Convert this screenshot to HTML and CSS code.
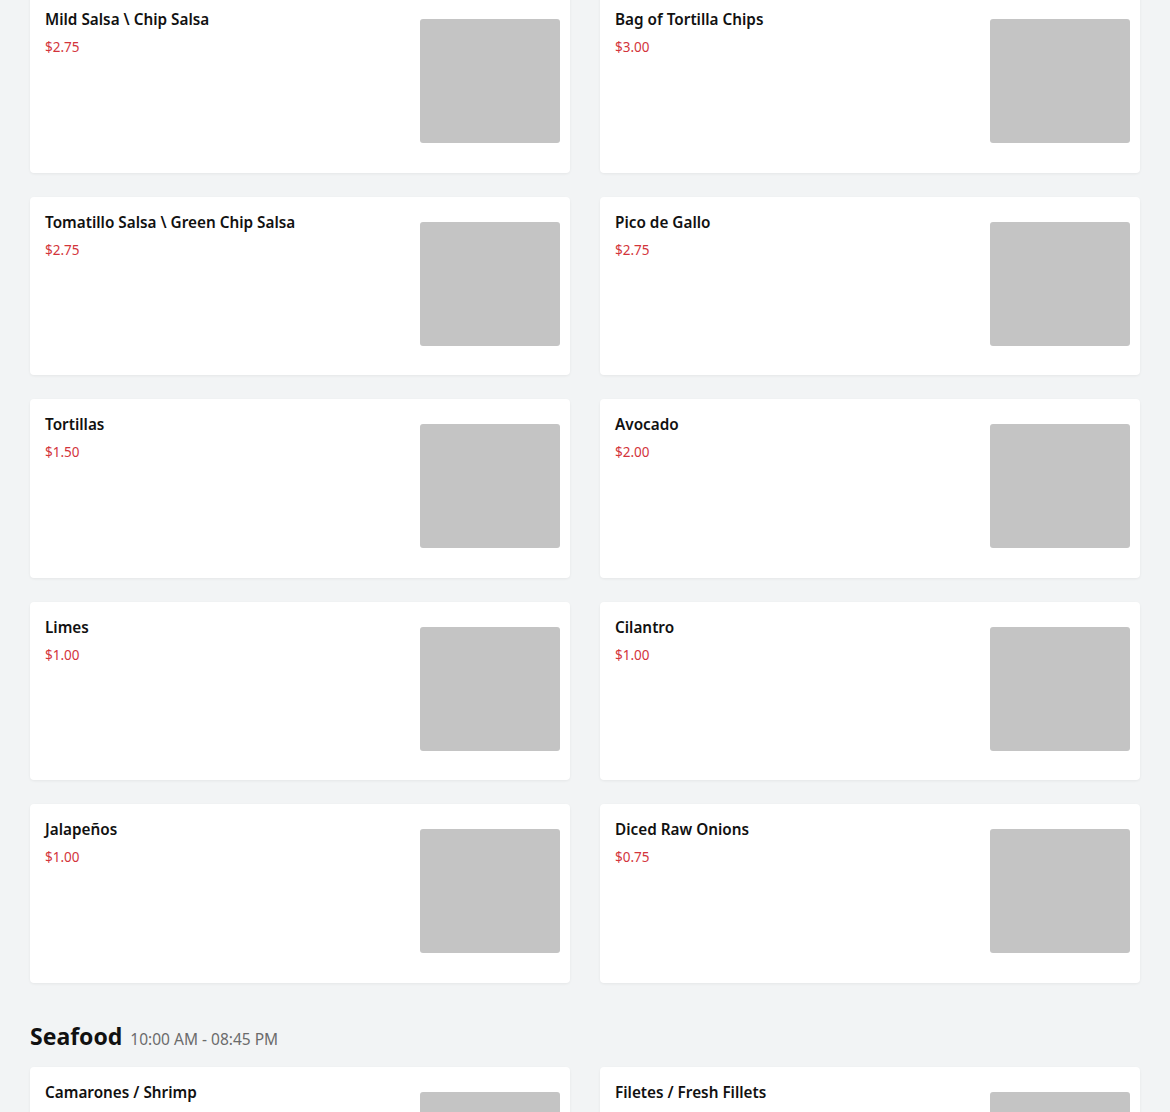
FILE: index.html
```html
<!DOCTYPE html>
<html lang="en">
<head>
<meta charset="UTF-8">
<meta name="viewport" content="width=device-width, initial-scale=1.0">
<title>Menu</title>
<link rel="stylesheet" href="styles.css">
</head>
<body>

<div class="menu">
  <div class="section first">
    <div class="grid">
      <div class="card">
        <div class="info"><div class="name">Mild Salsa \ Chip Salsa</div><div class="price">$2.75</div></div>
        <div class="thumb"></div>
      </div>
      <div class="card">
        <div class="info"><div class="name">Bag of Tortilla Chips</div><div class="price">$3.00</div></div>
        <div class="thumb"></div>
      </div>
      <div class="card">
        <div class="info"><div class="name">Tomatillo Salsa \ Green Chip Salsa</div><div class="price">$2.75</div></div>
        <div class="thumb"></div>
      </div>
      <div class="card">
        <div class="info"><div class="name">Pico de Gallo</div><div class="price">$2.75</div></div>
        <div class="thumb"></div>
      </div>
      <div class="card">
        <div class="info"><div class="name">Tortillas</div><div class="price">$1.50</div></div>
        <div class="thumb"></div>
      </div>
      <div class="card">
        <div class="info"><div class="name">Avocado</div><div class="price">$2.00</div></div>
        <div class="thumb"></div>
      </div>
      <div class="card">
        <div class="info"><div class="name">Limes</div><div class="price">$1.00</div></div>
        <div class="thumb"></div>
      </div>
      <div class="card">
        <div class="info"><div class="name">Cilantro</div><div class="price">$1.00</div></div>
        <div class="thumb"></div>
      </div>
      <div class="card">
        <div class="info"><div class="name">Jalapeños</div><div class="price">$1.00</div></div>
        <div class="thumb"></div>
      </div>
      <div class="card">
        <div class="info"><div class="name">Diced Raw Onions</div><div class="price">$0.75</div></div>
        <div class="thumb"></div>
      </div>
    </div>
  </div>

  <div class="section">
    <h2 class="section-title">Seafood <span class="hours">10:00 AM - 08:45 PM</span></h2>
    <div class="grid">
      <div class="card">
        <div class="info"><div class="name">Camarones / Shrimp</div></div>
        <div class="thumb"></div>
      </div>
      <div class="card">
        <div class="info"><div class="name">Filetes / Fresh Fillets</div></div>
        <div class="thumb"></div>
      </div>
    </div>
  </div>
</div>

</body>
</html>
```

FILE: styles.css
```css
body {
  margin: 0;
  padding: 0;
  background-color: #f2f4f5;
  font-family: "Noto Sans", "Open Sans", sans-serif;
  color: #111;
  overflow: hidden;
}
.menu {
  padding: 0 30px;
}
.section.first {
  margin-top: -6px;
}
.section-title {
  margin: 38px 0 13px;
  font-size: 23px;
  line-height: 30px;
  font-weight: 700;
}
.hours {
  font-size: 15.5px;
  font-weight: 400;
  color: #6b6b6b;
  margin-left: 2px;
}
.grid {
  display: grid;
  grid-template-columns: 1fr 1fr;
  column-gap: 30px;
  row-gap: 24px;
}
.card {
  background-color: #fff;
  border-radius: 4px;
  box-shadow: 0 1px 3px rgba(0, 0, 0, 0.06);
  height: 178.5px;
  box-sizing: border-box;
  padding: 25px 10px 0 15px;
  display: flex;
  justify-content: space-between;
  align-items: flex-start;
}
.name {
  font-size: 15.3px;
  line-height: 20px;
  font-weight: 600;
  margin-top: -10px;
}
.price {
  font-size: 13.5px;
  line-height: 20px;
  color: #d3343b;
  margin-top: 8px;
}
.thumb {
  width: 140px;
  height: 124px;
  background-color: #c4c4c4;
  border-radius: 3px;
  flex-shrink: 0;
}
```
